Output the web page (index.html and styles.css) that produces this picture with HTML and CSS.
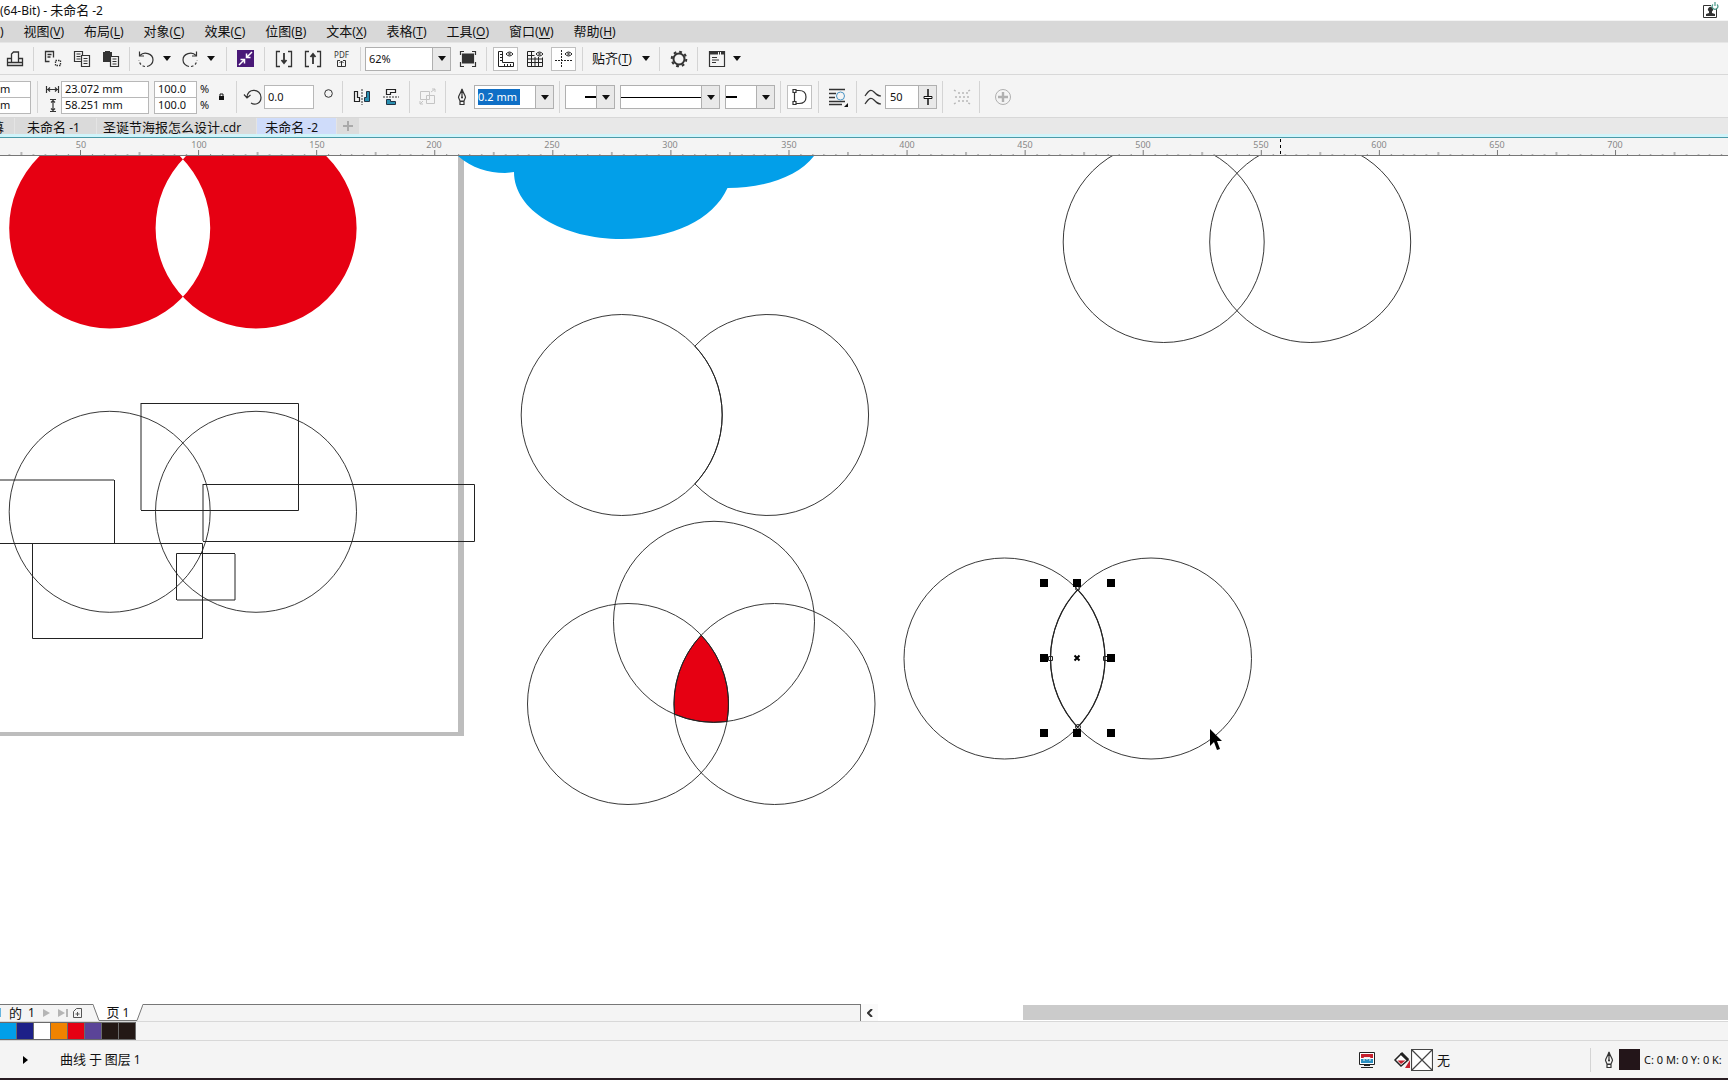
FILE: index.html
```html
<!DOCTYPE html>
<html lang="zh-CN">
<head>
<meta charset="utf-8">
<title>未命名 -2</title>
<link rel="stylesheet" href="styles.css">
</head>
<body>
<svg class="defs" aria-hidden="true">
  <symbol id="caret" viewBox="0 0 8 5"><path d="M0 0h8L4 5z" fill="#111"/></symbol>
  <symbol id="pen" viewBox="0 0 12 18"><path d="M6 1C5 5 2.500 7.500 2.500 9.500L4 13h4l1.500-3.500C9.500 7.500 7 5 6 1zM6 1v9M4 13.500h4v3H4z" fill="none" stroke="#333" stroke-width="1.200"/><circle cx="6" cy="9.500" r="1" fill="#333"/></symbol>
</svg>
<header class="title-bar">
  <h1 class="title"><span class="lat">(64-Bit) - </span>未命名<span class="lat"> -2</span></h1>
  <button class="account" aria-label="帐户"><svg width="17" height="17" viewBox="0 0 17 17"><path d="M9 3.500H1.500v12h13V6" fill="none" stroke="#333"/><path d="M4 14v-2l3-1V9.500a2.500 2.500 0 1 1 3 0V11l3 1v2z" fill="#333"/><path d="M11 2.500a2.800 2.800 0 1 0 4 0M13 0v4" fill="none" stroke="#4a9a8a" stroke-width="1.200"/></svg></button>
</header>
<nav class="menu-bar">
  <a class="menu" href="#"><span class="lat">)</span></a>
  <a class="menu" href="#">视图<span class="lat">(<u>V</u>)</span></a>
  <a class="menu" href="#">布局<span class="lat">(<u>L</u>)</span></a>
  <a class="menu" href="#">对象<span class="lat">(<u>C</u>)</span></a>
  <a class="menu" href="#">效果<span class="lat">(<u>C</u>)</span></a>
  <a class="menu" href="#">位图<span class="lat">(<u>B</u>)</span></a>
  <a class="menu" href="#">文本<span class="lat">(<u>X</u>)</span></a>
  <a class="menu" href="#">表格<span class="lat">(<u>T</u>)</span></a>
  <a class="menu" href="#">工具<span class="lat">(<u>O</u>)</span></a>
  <a class="menu" href="#">窗口<span class="lat">(<u>W</u>)</span></a>
  <a class="menu" href="#">帮助<span class="lat">(<u>H</u>)</span></a>
</nav>

<div class="bar standard-bar">
  <button class="tool" aria-label="打印"><svg width="18" height="18" viewBox="0 0 18 18" fill="none" stroke="#333" stroke-width="1.300"><path d="M5.500 12V4l2-2h5v10M5 8.500H1.500v7h15v-7H13M1.500 12.500h15"/></svg></button>
  <i class="sep"></i>
  <button class="tool" aria-label="剪切"><svg width="18" height="18" viewBox="0 0 18 18" fill="none" stroke="#333" stroke-width="1.300"><path d="M5.500 11.500H1.500V1.500h8v6M3.500 4.500h4M3.500 7h3"/><path d="M11.500 10.500h5v5h-5z" stroke-dasharray="1.500 1"/></svg></button>
  <button class="tool" aria-label="复制"><svg width="18" height="18" viewBox="0 0 18 18" fill="none" stroke="#333" stroke-width="1.200"><path d="M8 11.500H1.500v-10h8V5M3.500 4h4M3.500 6.500h4M3.500 9h4M8.500 5.500h8v11h-8zM10.500 8.500h4M10.500 11h4M10.500 13.500h4"/></svg></button>
  <button class="tool" aria-label="粘贴"><svg width="18" height="18" viewBox="0 0 18 18" fill="none" stroke="#333" stroke-width="1.200"><path d="M1 2h2V1h5v1h2v4H8v6H1z" fill="#333" stroke="none"/><path d="M8.500 6.500h8v10h-8zM10.500 9h4M10.500 11.500h4M10.500 14h4"/></svg></button>
  <i class="sep"></i>
  <span class="split">
    <button class="slim" aria-label="撤消"><svg width="18" height="18" viewBox="0 0 18 18" fill="none" stroke="#333" stroke-width="1.200"><path d="M3 5.500C7 1 16 3.500 16 10c0 3.500-3 6-6 6.500"/><path d="M2.500 1.500v4.500H7"/><path d="M8 16.500C5 16 2.500 14 2 10" stroke-dasharray="2.500 2"/></svg></button>
    <button class="drop" aria-label="撤消列表"><svg width="8" height="5"><use href="#caret"/></svg></button>
  </span>
  <span class="split">
    <button class="slim" aria-label="重做"><svg width="18" height="18" viewBox="0 0 18 18" fill="none" stroke="#333" stroke-width="1.200"><path d="M15 5.500C11 1 2 3.500 2 10c0 3.500 3 6 6 6.500"/><path d="M15.500 1.500v4.500H11"/><path d="M10 16.500c3-.5 5.500-2.500 6-6.500" stroke-dasharray="2.500 2"/></svg></button>
    <button class="drop" aria-label="重做列表"><svg width="8" height="5"><use href="#caret"/></svg></button>
  </span>
  <i class="sep"></i>
  <button class="tool" aria-label="搜索内容"><svg width="17" height="17" viewBox="0 0 17 17"><path d="M0 0h17v17H0z" fill="#4a1a78"/><path d="M15 2l-5 5M9.500 3.500v4h4M2 15l5-5M3.500 9.500h4v4" fill="none" stroke="#fff" stroke-width="1.500"/></svg></button>
  <i class="sep"></i>
  <button class="tool" aria-label="导入"><svg width="18" height="18" viewBox="0 0 18 18" fill="none" stroke="#333" stroke-width="1.300"><path d="M5 1.500H1.500v15H5M13 1.500h3.500v15H13"/><path d="M9 3v10M6.500 10L9 13l2.500-3" stroke-width="1.800"/></svg></button>
  <button class="tool" aria-label="导出"><svg width="18" height="18" viewBox="0 0 18 18" fill="none" stroke="#333" stroke-width="1.300"><path d="M5 1.500H1.500v15H5M13 1.500h3.500v15H13"/><path d="M9 14V4M6.500 7L9 4l2.500 3" stroke-width="1.800"/></svg></button>
  <button class="tool pdf"><span>PDF</span><svg width="9" height="8" viewBox="0 0 9 8" fill="none" stroke="#333"><path d="M3 1.500H.5v6h8v-6H6M4.500 7V2M2.500 4l2-2 2 2"/></svg></button>
  <i class="sep"></i>
  <span class="combo zoom"><select aria-label="缩放级别"><option>62%</option></select><i class="arrow"><svg width="8" height="5"><use href="#caret"/></svg></i></span>
  <button class="tool" aria-label="全屏预览"><svg width="18" height="18" viewBox="0 0 18 18" fill="none" stroke="#333" stroke-width="1.200"><path d="M3.500 4h11v9h-11z" fill="#333"/><path d="M1.500 5V1.500H5M13 1.500h3.500V5M16.500 12v4.500H13M5 16.500H1.500V12"/></svg></button>
  <i class="sep"></i>
  <button class="tool on" aria-label="标尺"><svg width="18" height="18" viewBox="0 0 18 18" fill="none" stroke="#222"><path d="M1.500 1.500h4v11h11v4h-15zM3 4.500h2M3 7.500h2M3 10.500h2M7.500 14v2M10.500 14v2M13.500 14v2"/><path d="M9 4q3.500-4 7 0-3.500 4-7 0z"/><circle cx="12.500" cy="4" r=".8"/></svg></button>
  <button class="tool" aria-label="网格"><svg width="18" height="18" viewBox="0 0 18 18" fill="none" stroke="#222"><path d="M1.500 1.500h7M1.500 1.500v15h15v-9M1.500 5.500h7M1.500 9h15M1.500 12.500h15M5.500 1v15M9 7v9M12.500 7v9"/><path d="M10 4q3.500-4 7 0-3.500 4-7 0z"/><circle cx="13.500" cy="4" r=".8"/></svg></button>
  <button class="tool on" aria-label="辅助线"><svg width="18" height="18" viewBox="0 0 18 18" fill="none" stroke="#222"><path d="M6.500 0v18M0 10.500h18" stroke-dasharray="2 1"/><path d="M10 4q3.500-4 7 0-3.500 4-7 0z"/><circle cx="13.500" cy="4" r=".8"/></svg></button>
  <i class="sep"></i>
  <button class="snap"><span>贴齐<span class="lat">(<u>T</u>)</span></span><svg width="8" height="5"><use href="#caret"/></svg></button>
  <i class="sep"></i>
  <button class="tool" aria-label="选项"><svg width="18" height="18" viewBox="0 0 18 18" fill="none" stroke="#333"><circle cx="9" cy="9" r="5.500" stroke-width="2"/><circle cx="9" cy="9" r="7.300" stroke-width="2" stroke-dasharray="2.800 2.930"/></svg></button>
  <i class="sep"></i>
  <button class="tool" aria-label="应用程序启动器"><svg width="18" height="18" viewBox="0 0 18 18" fill="none" stroke="#333" stroke-width="1.200"><path d="M1.500 1.500h15v15h-15zM4 7.500h5M4 10h7M4 12.500h4"/><path d="M1 3h16" stroke-width="3" stroke-dasharray="9 1 1 1"/></svg></button>
  <button class="drop" aria-label="启动器列表"><svg width="8" height="5"><use href="#caret"/></svg></button>
</div>

<div class="bar property-bar">
  <span class="pair position"><input aria-label="X" value="m"><input aria-label="Y" value="m"></span>
  <i class="sep"></i>
  <svg class="size-icons" width="19" height="32" viewBox="0 0 19 32" fill="none" stroke="#333" stroke-width="1.200"><path d="M4.500 5v7M16.500 5v7M5 8.500h11M8 6.500l-2 2 2 2M13 6.500l2 2-2 2M8 18.500h6M8 30.500h6M11 19v11M9 21.500l2-2 2 2M9 27.500l2 2 2-2"/></svg>
  <span class="pair size"><input aria-label="宽度" value="23.072 mm"><input aria-label="高度" value="58.251 mm"></span>
  <span class="pair scale"><input aria-label="水平缩放" value="100.0"><input aria-label="垂直缩放" value="100.0"></span>
  <span class="percent"><span>%</span><span>%</span></span>
  <button class="lock" aria-label="锁定比率"><svg width="7" height="8" viewBox="0 0 7 8"><path d="M1 3h5v4H1z" fill="#111"/><path d="M2 3V1h3v2" fill="none" stroke="#111"/></svg></button>
  <i class="sep"></i>
  <svg class="lead" width="23" height="18" viewBox="0 0 23 18" fill="none" stroke="#333" stroke-width="1.200"><path d="M6 9.500C6 -.5 20 .5 20 9.500c0 6-6 8-10 5.500M3 6.500l3 3.500 3.500-3"/></svg>
  <span class="field angle"><input aria-label="旋转角度" value="0.0"></span>
  <span class="degree"><svg width="9" height="9" viewBox="0 0 9 9"><circle cx="4.500" cy="4.500" r="3.800" fill="none" stroke="#333"/></svg></span>
  <i class="sep"></i>
  <button class="tool" aria-label="水平镜像"><svg width="18" height="18" viewBox="0 0 18 18"><path d="M1.500 3.500h3v6h2v4h-5z" fill="none" stroke="#222" stroke-width="1.200"/><path d="M16.500 3.500h-3v6h-2v4h5z" fill="#2a8fb0" stroke="#234"/><path d="M9 1v16" stroke="#333" stroke-dasharray="2 1"/></svg></button>
  <button class="tool" aria-label="垂直镜像"><svg width="18" height="18" viewBox="0 0 18 18"><path d="M13.500 1.500v3h-5v2h-4v-5z" fill="none" stroke="#222" stroke-width="1.200"/><path d="M13.500 16.500v-3h-5v-2h-4v5z" fill="#2a8fb0" stroke="#234"/><path d="M1 9h16" stroke="#333" stroke-dasharray="2 1"/></svg></button>
  <i class="sep"></i>
  <button class="tool narrow" disabled aria-label="组合"><svg width="18" height="18" viewBox="0 0 18 18" fill="none" stroke="#c4c4c4"><path d="M1.500 3.500h9v8h-9zM7.500 7.500h8v8h-8zM12 4l4-3M13 1h3v3M1 16l3-3M1 13v3h3"/></svg></button>
  <i class="sep"></i>
  <svg class="lead" width="24" height="18"><use href="#pen" width="12" height="18" x="6"/></svg>
  <span class="combo outline"><input aria-label="轮廓宽度" value="0.2 mm"><button class="arrow" aria-label="宽度列表"><svg width="8" height="5"><use href="#caret"/></svg></button></span>
  <i class="sep loose"></i>
  <span class="combo head"><select aria-label="起始箭头"></select><i class="line start"></i><i class="arrow"><svg width="8" height="5"><use href="#caret"/></svg></i></span>
  <span class="combo style"><select aria-label="线条样式"></select><i class="line"></i><i class="arrow"><svg width="8" height="5"><use href="#caret"/></svg></i></span>
  <span class="combo head"><select aria-label="终止箭头"></select><i class="line end"></i><i class="arrow"><svg width="8" height="5"><use href="#caret"/></svg></i></span>
  <i class="sep"></i>
  <button class="tool on" aria-label="闭合曲线"><svg width="18" height="18" viewBox="0 0 18 18" fill="none" stroke="#333" stroke-width="1.200"><path d="M3.500 4v10M5 2.500h3q7 0 7 6.500t-7 6.500H5M2 1.500h3v3H2zM2 13.500h3v3H2z"/></svg></button>
  <i class="sep"></i>
  <button class="tool" aria-label="文本换行"><svg width="20" height="20" viewBox="0 0 20 20"><path d="M1 2.500h16M1 6.500h7M1 10.500h6M1 14.500h16M1 17.500h13" stroke="#333" stroke-width="1.300"/><circle cx="12.500" cy="9" r="4" fill="#f4f4f4" stroke="#4a94c4"/><path d="M20 16v4h-4z" fill="#111"/></svg></button>
  <i class="sep"></i>
  <svg class="lead" width="24" height="18" viewBox="0 0 24 18" fill="none" stroke="#333" stroke-width="1.200"><path d="M4 8C8 2 10 1 13 4s4 4 7 4M4 16c4-6 6-7 9-4s4 4 7 4"/></svg>
  <span class="combo smooth"><input aria-label="曲线平滑度" value="50"><button class="arrow" aria-label="平滑度滑块"><svg width="10" height="16" viewBox="0 0 10 16"><path d="M5 0v16" stroke="#111" stroke-width="1.500"/><path d="M1 7.500h8v2H1z" fill="#fff" stroke="#111"/></svg></button></span>
  <i class="sep loose"></i>
  <button class="tool narrow" disabled aria-label="边框"><svg width="18" height="18" viewBox="0 0 18 18" fill="none" stroke="#b8b8b8" stroke-width="1.500"><path d="M1 2l3 2M17 2l-3 2M1 16l3-2M17 16l-3-2M5 5h10M2 9h14M5 13h10" stroke-dasharray="2 2"/></svg></button>
  <i class="sep"></i>
  <button class="tool wide" disabled aria-label="添加"><svg width="18" height="18" viewBox="0 0 18 18" fill="none" stroke="#b0b0b0"><circle cx="9" cy="9" r="7.500"/><path d="M9 4v10M4 9h10" stroke-width="2.400"/></svg></button>
</div>

<nav class="doc-tabs">
  <a class="doc cut" href="#">幕</a>
  <a class="doc" href="#">未命名<span class="lat"> -1</span></a>
  <a class="doc named" href="#">圣诞节海报怎么设计<span class="lat">.cdr</span></a>
  <a class="doc active" href="#">未命名<span class="lat"> -2</span></a>
  <button class="new-doc" aria-label="新建文档"><svg width="10" height="10"><path d="M5 0v10M0 5h10" stroke="#aaa" stroke-width="2"/></svg></button>
</nav>

<div class="ruler">
  <svg width="100%" height="18">
    <defs><pattern id="ticks" x="80" width="118.080" height="18" patternUnits="userSpaceOnUse"><path d="M.5 12v5M59.500 14v3" stroke="#777"/><path d="M12.500 16v1M24.500 16v1M35.500 16v1M47.500 16v1M71.500 16v1M83.500 16v1M94.500 16v1M106.500 16v1" stroke="#888"/></pattern></defs>
    <rect width="100%" height="18" fill="url(#ticks)"/>
    <g class="numbers"><text x="81" y="10">50</text><text x="199" y="10">100</text><text x="317" y="10">150</text><text x="434" y="10">200</text><text x="552" y="10">250</text><text x="670" y="10">300</text><text x="789" y="10">350</text><text x="907" y="10">400</text><text x="1025" y="10">450</text><text x="1143" y="10">500</text><text x="1261" y="10">550</text><text x="1379" y="10">600</text><text x="1497" y="10">650</text><text x="1615" y="10">700</text></g>
    <path d="M1280.500 1v17" stroke="#000" stroke-dasharray="3 3"/>
  </svg>
</div>

<main class="canvas">
  <svg width="100%" height="100%" viewBox="0 156 1728 848" preserveAspectRatio="xMinYMin slice">
    <path d="M458 156h6v580H0v-4h458z" fill="#bdbdbd"/>
    <path fill="#e60012" fill-rule="evenodd" d="M9.200 228a100.500 100.500 0 1 1 201 0a100.500 100.500 0 1 1-201 0zM155.600 228a100.500 100.500 0 1 1 201 0a100.500 100.500 0 1 1-201 0z"/>
    <path fill="#029fe9" d="M458 156C472 168 488 173 505 173L514 172C514 210 562 239 622 239C672 239 713 220 727.500 188C764 188 798 177 814 156z"/>
    <g fill="none" stroke="#222" stroke-width="1">
      <g stroke-width=".9">
        <circle cx="109.700" cy="511.800" r="100.500"/><circle cx="256" cy="511.800" r="100.500"/>
        <circle cx="621.700" cy="415" r="100.500"/>
        <path d="M694.900 346.100A100.500 100.500 0 1 1 694.900 483.900"/>
        <circle cx="1163.700" cy="242" r="100.500"/><circle cx="1310.200" cy="242" r="100.500"/>
        <circle cx="1004.500" cy="658.500" r="100.500"/><circle cx="1151" cy="658.500" r="100.500"/>
      </g>
      <path d="M694.900 346.100A100.500 100.500 0 0 1 694.900 483.900"/>
      <path d="M0 480H114M141 403V510M203 484V541M235 554V600H177"/>
      <path d="M141 403.500H298.500V510.500H141M203 484.500H474.500V541.500H203M114.500 480V543.500M-1 543.500H202.500V638.500H32.500V543.500M235 553.500H176.500V600"/>
      <path d="M701.200 635.200A100.500 100.500 0 0 1 727 721.500A100.500 100.500 0 0 1 674.500 714.200A100.500 100.500 0 0 1 701.200 635.200z" fill="#e60012"/>
      <circle cx="714" cy="621.800" r="100.500" stroke-width=".9"/><circle cx="628" cy="704" r="100.500" stroke-width=".9"/><circle cx="774.500" cy="704" r="100.500" stroke-width=".9"/>
      <path d="M1077.700 589.700A100.500 100.500 0 0 1 1077.700 727.300A100.500 100.500 0 0 1 1077.700 589.700z" stroke-width="1.200"/>
      <circle cx="1077.500" cy="588.500" r="2"/><circle cx="1078" cy="727" r="2.500"/><path d="M1048.500 656.500h4v4h-4zM1103.500 656.500h4v4h-4z"/>
    </g>
    <path d="M1040 579h8v8h-8zM1073 579h8v8h-8zM1107 579h8v8h-8zM1040 654h8v8h-8zM1107 654h8v8h-8zM1040 729h8v8h-8zM1073 729h8v8h-8zM1107 729h8v8h-8z"/>
    <path d="M1074.500 655.500l5 5M1079.500 655.500l-5 5" stroke="#000" stroke-width="2"/>
    <path d="M1210 729v17l4-4 3 8 3-1-3-8h5z"/>
  </svg>
</main>

<div class="page-bar">
  <div class="page-nav">
    <span class="count"><span class="lat">1</span>的<span class="lat">1</span></span>
    <button class="nav" disabled aria-label="下一页"><svg width="7" height="8"><path d="M0 0l7 4-7 4z" fill="#b5b5b5"/></svg></button>
    <button class="nav" disabled aria-label="末页"><svg width="10" height="8"><path d="M0 0l7 4-7 4zM8 0h2v8H8z" fill="#b5b5b5"/></svg></button>
    <button class="nav" aria-label="添加页面"><svg width="10" height="11" viewBox="0 0 10 11" fill="none" stroke="#555"><path d="M3.500.5h5v9h-8v-6zM4.500 4v4M2.500 6h4"/></svg></button>
    <a class="page-tab" href="#"><svg class="tab-shape" viewBox="0 0 50 18" width="50" height="18"><path d="M0 0l6 16.500h38L50 0z" fill="#fff"/><path d="M0 .5l6 16h38l6-16" fill="none" stroke="#777"/></svg><span>页 <span class="lat">1</span></span></a>
  </div>
  <div class="scroll">
    <button class="scroll-left" aria-label="向左滚动"><svg width="6" height="8"><path d="M5 0L1 4l4 4" fill="none" stroke="#333" stroke-width="2"/></svg></button>
    <div class="thumb"></div>
  </div>
</div>

<div class="palette">
  <button class="swatch cyan" aria-label="青"></button><button class="swatch navy" aria-label="深蓝"></button><button class="swatch white" aria-label="白"></button><button class="swatch orange" aria-label="橙"></button><button class="swatch red" aria-label="红"></button><button class="swatch violet" aria-label="紫"></button><button class="swatch black" aria-label="黑"></button><button class="swatch black" aria-label="黑"></button>
</div>

<footer class="status">
  <button class="expand" aria-label="展开"><svg width="5" height="8"><path d="M0 0l5 4-5 4z" fill="#000"/></svg></button>
  <span class="object">曲线 于 图层 <span class="lat">1</span></span>
  <div class="fill-info">
    <svg class="proof" width="18" height="18" viewBox="0 0 18 18"><path d="M1.500 1.500h15v12h-15z" fill="#fff" stroke="#222"/><path d="M3 3h12v4H3z" fill="#c5202e"/><path d="M3 8h12v4H3z" fill="#2a8fc0"/><path d="M6 10V6.500h6V10M8 8h2" fill="none" stroke="#eee"/><path d="M6 14h6v1H6zM3 16h12v1H3z" fill="#222"/></svg>
    <svg width="18" height="18" viewBox="0 0 18 18"><path d="M2 9l6-6 7 6-7 6z" fill="#fff" stroke="#222" stroke-width="1.500"/><path d="M4.500 9.500h8L8 13z" fill="#c5202e"/><path d="M8 2l7 7" stroke="#222" stroke-width="3"/><path d="M17 9v8h-5z" fill="#c5202e"/></svg>
    <svg width="22" height="22" viewBox="0 0 22 22"><path d="M.5.5h21v21H.5zM1 1l20 20M21 1L1 21" fill="#fff" stroke="#444" stroke-width="1.200"/></svg>
    <span class="none">无</span>
  </div>
  <div class="outline-info">
    <svg width="12" height="18"><use href="#pen"/></svg>
    <i class="ink"></i>
    <span class="cmyk">C: 0 M: 0 Y: 0 K:</span>
  </div>
</footer>
</body>
</html>
```
FILE: styles.css
```css
* { box-sizing: border-box; }
body {
  margin: 0;
  height: 100vh;
  display: flex;
  flex-direction: column;
  overflow: hidden;
  background: #fff;
  color: #111;
  font: 13px/18px "Noto Sans CJK SC", sans-serif;
}
button, input, select {
  margin: 0;
  padding: 0;
  border: 0;
  background: none;
  color: inherit;
  font: 11px/16px "Noto Sans", "Noto Sans CJK SC", sans-serif;
  min-width: 0;
}
a { color: inherit; text-decoration: none; }
svg { display: block; flex: none; }
.defs { display: none; }
.lat { font-family: "Noto Sans", sans-serif; font-size: 12px; white-space: pre; }
u { text-underline-offset: 2px; }

.title-bar {
  height: 21px;
  flex: none;
  display: flex;
  justify-content: space-between;
  align-items: center;
  padding-right: 9px;
  border-bottom: 1px solid #f4f4f4;
}
.title { margin: 0; font-size: 13px; font-weight: 400; }

.menu-bar {
  height: 22px;
  flex: none;
  display: flex;
  align-items: center;
  gap: 20px;
  background: #d8d8d8;
  border-bottom: 1px solid #e6e6e6;
  white-space: nowrap;
}

.bar {
  flex: none;
  display: flex;
  align-items: center;
  background: #f4f4f4;
  border-bottom: 1px solid #d8d8d8;
}
.standard-bar { height: 32px; }
.property-bar { height: 43px; padding-top: 2px; }
.sep { width: 1px; height: 24px; margin: 0 4px; background: #d4d4d4; flex: none; }
.property-bar .sep { height: 32px; }
.property-bar .loose { margin: 0 5px; }
.tool, .slim, .drop, .lock {
  flex: none;
  height: 24px;
  display: flex;
  align-items: center;
  justify-content: center;
}
.tool { width: 29px; }
.narrow { width: 27px; }
.wide { width: 38px; }
.slim { width: 24px; }
.lock { width: 22px; }
.drop { width: 12px; }
.on { position: relative; }
.on::before {
  content: "";
  position: absolute;
  inset: 0 2px;
  border: 1px solid #c0c0c0;
  background: #fff;
}
.on svg { position: relative; }
.split { display: flex; gap: 3px; width: 44px; flex: none; }
.pdf { flex-direction: column; font-size: 8px; line-height: 8px; color: #333; }
.snap { width: 68px; padding: 0 5px; display: flex; align-items: center; justify-content: space-between; font-size: 13px; font-family: "Noto Sans CJK SC", sans-serif; }

.combo {
  flex: none;
  height: 24px;
  display: grid;
  grid-template-columns: 1fr 18px;
  border: 1px solid #b0b0b0;
  background: #fff;
}
.combo > * { grid-row: 1; }
.combo select { grid-column: 1 / 3; appearance: none; padding-left: 3px; }
.combo .arrow {
  grid-column: 2;
  display: flex;
  align-items: center;
  justify-content: center;
  background: #e9e9e9;
  border-left: 1px solid #b0b0b0;
  pointer-events: none;
}
.zoom { width: 86px; margin-right: 2px; }
.outline { width: 80px; }
.outline input { width: 42px; height: 16px; margin: 3px; background: #0f6fc6; color: #fff; }
.head { width: 50px; margin-right: 5px; }
.style { width: 100px; margin-right: 5px; }
.head + .sep { margin-left: 0; }
.line { grid-column: 1; align-self: center; height: 1px; background: #000; pointer-events: none; }
.line.start, .line.end { width: 11px; height: 2px; }
.line.start { justify-self: end; }
.smooth { width: 52px; }
.smooth input { padding-left: 4px; width: 100%; }

.pair { flex: none; display: grid; height: 33px; border: 1px solid #b8b8b8; background: #fff; }
.pair input { width: 100%; padding-left: 3px; height: 15px; }
.pair input + input { border-top: 1px solid #b8b8b8; height: 16px; }
.position { width: 31px; margin-right: 2px; border-left: 0; }
.position input { padding-left: 0; }
.size { width: 88px; margin-right: 5px; }
.scale { width: 43px; margin-right: 3px; }
.percent { display: grid; width: 10px; font: 11px/16px "Noto Sans", sans-serif; }
.field { height: 24px; border: 1px solid #b8b8b8; background: #fff; display: flex; flex: none; }
.angle { width: 50px; }
.angle input { width: 100%; padding-left: 3px; }
.degree { width: 24px; height: 16px; padding-left: 10px; display: flex; align-self: center; }

.doc-tabs {
  height: 20px;
  flex: none;
  display: flex;
  background: #e8e8e8;
  border-bottom: 1px solid #4a9aa8;
  box-shadow: inset 0 -3px #d0f4fa;
  padding-bottom: 3px;
}
.doc { background: #dadada; padding: 0 16px 0 12px; line-height: 18px; white-space: nowrap; border-right: 1px solid #e4e4e4; height: 16px; }
.cut { width: 15px; padding: 0 10px 0 0; display: flex; justify-content: flex-end; }
.named { padding: 0 15px 0 6px; }
.active { width: 80px; padding: 0 0 0 8px; background: #cfdcfa; }
.new-doc { width: 22px; display: flex; align-items: center; justify-content: center; background: #dcdcdc; }

.ruler { height: 18px; flex: none; background: #f4f4f4; border-bottom: 1px solid #777; }
.numbers { font: 9px "Noto Sans", sans-serif; fill: #888; text-anchor: middle; }
.canvas { flex: 1; min-height: 0; overflow: hidden; }

.page-bar { height: 18px; flex: none; display: flex; border-bottom: 1px solid #d8d8d8; }
.page-nav {
  width: 861px;
  flex: none;
  display: flex;
  align-items: center;
  background: #f4f4f4;
  border-top: 1px solid #777;
  border-right: 1px solid #777;
  line-height: 16px;
}
.count { width: 47px; margin-left: -4px; display: flex; gap: 6px; flex: none; }
.nav { width: 15px; flex: none; display: flex; align-items: center; }
.page-tab { position: relative; width: 50px; height: 18px; margin: -1px 0 0 5px; text-align: center; line-height: 15px; flex: none; }
.tab-shape { position: absolute; inset: 0; }
.page-tab span { position: relative; }
.scroll { flex: 1; display: flex; justify-content: space-between; }
.scroll-left { width: 17px; display: flex; align-items: center; justify-content: center; background: #fafafa; }
.thumb { width: calc(100% - 162px); margin: 1px 0; background: #cbcbcb; }

.palette { height: 19px; flex: none; display: flex; background: #f4f4f4; border-bottom: 1px solid #d8d8d8; }
.swatch { width: 17px; border: 1px solid #6a6a6a; border-left: 0; }
.cyan { background: #029fe9; }
.navy { background: #1d2088; }
.white { background: #fff; }
.orange { background: #f08300; }
.red { background: #e60012; }
.violet { background: #5b4498; }
.black { background: #231815; }

.status {
  height: 39px;
  flex: none;
  display: flex;
  align-items: center;
  background: #f4f4f4;
  border-bottom: 2px solid #281c22;
  white-space: nowrap;
}
.expand { width: 50px; display: flex; justify-content: center; }
.object { padding-left: 10px; flex: 1; }
.fill-info { width: 233px; height: 24px; display: flex; align-items: center; flex: none; border-right: 1px solid #d4d4d4; }
.proof { margin-right: 17px; }
.none { padding-left: 4px; }
.outline-info { width: 137px; padding-left: 12px; display: flex; align-items: center; gap: 4px; flex: none; overflow: hidden; }
.ink { width: 21px; height: 21px; background: #231519; flex: none; }
.cmyk { font: 11px/16px "Noto Sans", sans-serif; }
```
